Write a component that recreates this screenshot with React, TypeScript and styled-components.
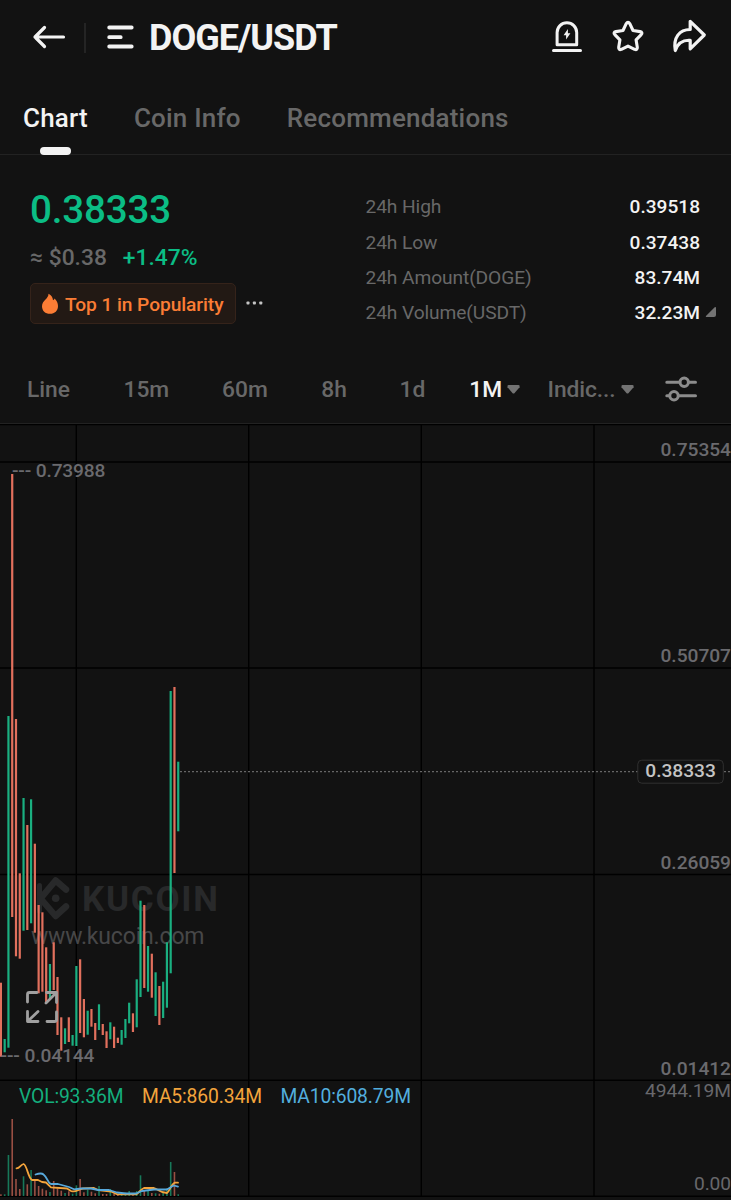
import React from 'react';
import styled, { createGlobalStyle } from 'styled-components';

const GlobalStyle = createGlobalStyle`
  *, *::before, *::after { box-sizing: border-box; }
  html, body { margin: 0; padding: 0; background: #121212; }
  body { font-family: Roboto, "Liberation Sans", sans-serif; overflow: hidden; }
`;

const Screen = styled.main`
  width: 731px;
  height: 1200px;
  display: flex;
  flex-direction: column;
  background: #121212;
  color: #f3f3f3;
  overflow: hidden;
  white-space: nowrap;
`;

const Header = styled.header`
  height: 75px;
  flex: none;
  display: flex;
  align-items: center;
  padding: 0 24px 0 32px;
`;

const Divider = styled.span`
  width: 2px;
  height: 30px;
  margin: 0 19px 0 18px;
  background: #242424;
`;

const Title = styled.h1`
  margin: 0 auto 0 15px;
  font-size: 36px;
  font-weight: 700;
  letter-spacing: -1px;
`;

const Actions = styled.div`
  display: flex;
  align-items: center;
  gap: 26px;
  padding-bottom: 3px;
`;

const Tabs = styled.nav`
  height: 80px;
  flex: none;
  display: flex;
  gap: 46px;
  padding-left: 23px;
  border-bottom: 1px solid #222;
`;

const Tab = styled.div<{ $active?: boolean }>`
  display: flex;
  flex-direction: column;
  align-items: center;
  justify-content: space-between;
  margin-bottom: -1px;
  padding-top: 27px;
  font-size: 26px;
  line-height: 32px;
  font-weight: 500;
  letter-spacing: 0.2px;
  color: ${p => (p.$active ? '#f3f3f3' : '#686868')};

  &::after {
    content: '';
    width: 31px;
    height: 8px;
    border-radius: 4px;
    background: ${p => (p.$active ? '#f3f3f3' : 'transparent')};
  }
`;

const Summary = styled.section`
  height: 201px;
  flex: none;
  display: flex;
  justify-content: space-between;
  padding: 32px 31px 0 30px;
`;

const PriceColumn = styled.div`
  display: flex;
  flex-direction: column;
`;

const Price = styled.div`
  height: 46px;
  line-height: 46px;
  font-size: 38.6px;
  font-weight: 500;
  letter-spacing: -0.2px;
  color: #0bbd85;
`;

const Converted = styled.div`
  display: flex;
  gap: 16px;
  height: 50px;
  line-height: 49px;
  font-size: 22.8px;
  font-weight: 500;
  color: #686868;
`;

const Change = styled.span`
  color: #0bbd85;
`;

const BadgeRow = styled.div`
  display: flex;
  align-items: center;
  gap: 9px;
`;

const Badge = styled.div`
  width: 206px;
  height: 41px;
  display: flex;
  align-items: center;
  gap: 6px;
  padding: 1px 0 0 9px;
  border: 1px solid #35231a;
  border-radius: 5px;
  background: #221914;
  color: #fb7d35;
  font-size: 19.2px;
  font-weight: 500;
  letter-spacing: -0.08px;

  svg {
    margin: 0 0 1px 1px;
  }
`;

const MoreDots = styled.svg`
  margin-bottom: 1px;
`;

const Stats = styled.dl`
  width: 334.5px;
  margin: 2.4px 0 0;
  display: flex;
  flex-direction: column;
`;

const Stat = styled.div`
  position: relative;
  height: 35.1px;
  display: flex;
  align-items: center;
  justify-content: space-between;
`;

const StatLabel = styled.dt`
  font-size: 19.2px;
  letter-spacing: -0.1px;
  color: #686868;
`;

const StatValue = styled.dd`
  margin: 0;
  font-size: 19.1px;
  font-weight: 500;
  color: #f3f3f3;
`;

const Corner = styled.svg`
  position: absolute;
  left: 339px;
  top: 11px;
`;

const Intervals = styled.nav`
  height: 68px;
  flex: none;
  display: flex;
  align-items: center;
  padding: 0 33px 0 27px;
  border-bottom: 1px solid #222;
`;

const Interval = styled.div<{ $active?: boolean; $gap: number; $spacing?: number }>`
  display: flex;
  align-items: center;
  gap: 5px;
  margin-right: ${p => p.$gap}px;
  font-size: 22.8px;
  font-weight: 500;
  letter-spacing: ${p => p.$spacing ?? 0}px;
  color: ${p => (p.$active ? '#f3f3f3' : '#686868')};
`;

const SettingsIcon = styled.svg`
  margin: 0 1px 1px auto;
`;

const Chart = styled.svg`
  display: block;
  flex: none;
  font-family: Roboto, "Liberation Sans", sans-serif;
`;

const Caret = () => (
  <svg width="13" height="10" viewBox="0 0 13 10">
    <path d="M1.6 0h9.800q1.200 0 1.200 1v1.200L7.600 7.900q-1.100 1-2.200 0L.5 2.200V1Q.5 0 1.600 0z" fill="#737373" />
  </svg>
);

// [rising, high, low, volume top]
const candles: [number, number, number, number][] = [
  [0, 982.7, 1056.7, 1194.3], [1, 1039, 1052.3, 1194.3], [1, 716, 1047.7, 1155], [0, 474, 917, 1119],
  [0, 719, 956.3, 1179], [0, 873.3, 958.7, 1189], [1, 798, 930.7, 1176.3], [0, 825, 930, 1184.3],
  [1, 799.3, 923.3, 1170], [0, 843.7, 932.7, 1181], [0, 905, 993.3, 1186], [0, 912.3, 991.7, 1188.7],
  [0, 947.3, 1003, 1190.3], [1, 964, 998, 1192], [0, 942.3, 990, 1181], [0, 977, 1035, 1188.3],
  [0, 1017.3, 1050.7, 1190.7], [1, 1028.3, 1044, 1193], [0, 1017.3, 1042, 1191.3], [1, 1035, 1045.7, 1193.7],
  [1, 966, 1046, 1185.3], [0, 959.3, 1033, 1179], [0, 999, 1037.3, 1192.3], [1, 1010.7, 1034.7, 1189.7],
  [0, 1009, 1026.7, 1191.7], [0, 1023, 1040, 1193.3], [1, 1004.3, 1030, 1186], [0, 1024, 1035, 1194],
  [0, 1031.3, 1048, 1194], [1, 1022.3, 1039.3, 1189], [0, 1026.7, 1048, 1193.7], [0, 1037.7, 1043, 1194.5],
  [1, 1030, 1044.7, 1194], [1, 1019, 1038, 1192.7], [1, 1002.7, 1023.3, 1191], [0, 1013.3, 1032, 1193.7],
  [1, 979.3, 1027.3, 1191], [1, 900.7, 997, 1175.3], [0, 905, 988, 1190], [1, 946, 991.7, 1190.3],
  [0, 953.7, 997.7, 1193], [1, 972.3, 1016, 1193.3], [0, 986, 1025, 1193.7], [1, 981.7, 1018, 1192.3],
  [1, 942.3, 1007.7, 1188.3], [1, 691, 973.3, 1162], [0, 687, 873, 1172], [1, 761.7, 831.3, 1194.3],
];
const candleX = (i: number) => 0.9 + i * 3.773;

const stats = [
  ['24h High', '0.39518'],
  ['24h Low', '0.37438'],
  ['24h Amount(DOGE)', '83.74M'],
  ['24h Volume(USDT)', '32.23M'],
];

const priceLabels: [string, number][] = [
  ['0.75354', 456], ['0.50707', 662], ['0.26059', 868.5], ['0.01412', 1074.7],
];

export default function App() {
  return (
    <Screen>
      <GlobalStyle />
      <Header>
        <svg width="34" height="30" viewBox="0 0 34 30" fill="none" stroke="#f3f3f3" strokeWidth="3.2" strokeLinecap="round" strokeLinejoin="round">
          <path d="M31.5 14H3M12.5 4.500L3 14l9.500 9.500" />
        </svg>
        <Divider />
        <svg width="29" height="26" viewBox="0 0 29 26" fill="none" stroke="#f3f3f3" strokeWidth="3.800" strokeLinecap="round">
          <path d="M4.200 2.500h22.500M4.200 12.200h11.500M4.200 21.500h22.500" />
        </svg>
        <Title>DOGE/USDT</Title>
        <Actions>
          <svg width="34" height="36" viewBox="0 0 34 36" fill="none" stroke="#f3f3f3" strokeWidth="3" strokeLinecap="round" strokeLinejoin="round">
            <path d="M8.100 26.800V14.500a9.800 9.800 0 0 1 19.600 0v12.300zM4.500 32.600h27" />
            <path d="M18.900 11l-4.300 6.200h2.500V21.500l4.300-6.200h-2.500z" fill="#f3f3f3" stroke="none" />
          </svg>
          <svg width="36" height="36" viewBox="0 0 36 36" fill="none" stroke="#f3f3f3" strokeWidth="3.100" strokeLinejoin="round">
            <path d="M17.100 5.800q1.900-2.900 3.800 0l3.100 6.700 7.100 1.100q3 .8 1.100 3l-5.100 5.300 1.200 7.400q.2 3.100-2.700 2L19 28.100 12.400 31.300q-2.900 1.100-2.700-2l1.200-7.400-5.100-5.300q-1.900-2.200 1.100-3l7.100-1.100z" />
          </svg>
          <svg width="36" height="38" viewBox="0 0 36 38" fill="none" stroke="#f3f3f3" strokeWidth="3.200" strokeLinejoin="round">
            <path d="M19.200 4.300L33.300 18 19.200 31.800V23.300C11 22.800 6.500 27 4.300 33.500 2 20.400 8.500 12.500 19.200 12.500z" />
          </svg>
        </Actions>
      </Header>

      <Tabs>
        <Tab $active>Chart</Tab>
        <Tab>Coin Info</Tab>
        <Tab>Recommendations</Tab>
      </Tabs>

      <Summary>
        <PriceColumn>
          <Price>0.38333</Price>
          <Converted>
            <span>≈ $0.38</span>
            <Change>+1.47%</Change>
          </Converted>
          <BadgeRow>
            <Badge>
              <svg width="18" height="22" viewBox="0 0 18 22">
                <path d="M7.500.8c3 1.700 4.300 3.800 4.500 6.400.9-.3 1.400-.9 1.600-1.700 2.200 2.200 3.400 4.800 3.400 7.500 0 4.700-3.200 7.800-8 7.800S1 17.700 1 13.200c0-3 1.500-4.800 3.500-6.700C6.300 4.800 7.500 3.200 7.500.8z" fill="#fb7d35" />
              </svg>
              Top 1 in Popularity
            </Badge>
            <MoreDots width="18" height="4" viewBox="0 0 18 4" fill="#c4c4c4">
              <rect x="1.500" y="0.500" width="3" height="3" rx="0.800" />
              <rect x="7.900" y="0.500" width="3" height="3" rx="0.800" />
              <rect x="14.300" y="0.500" width="3" height="3" rx="0.800" />
            </MoreDots>
          </BadgeRow>
        </PriceColumn>
        <Stats>
          {stats.map(([label, value], i) => (
            <Stat key={label}>
              <StatLabel>{label}</StatLabel>
              <StatValue>{value}</StatValue>
              {i === 3 && (
                <Corner width="12" height="12" viewBox="0 0 12 12">
                  <path d="M9.700 1.300Q11 .5 11 2v7q0 2-2 2H2Q0 11 1.200 9.700z" fill="#737373" />
                </Corner>
              )}
            </Stat>
          ))}
        </Stats>
      </Summary>

      <Intervals>
        <Interval $gap={53.4}>Line</Interval>
        <Interval $gap={52.8}>15m</Interval>
        <Interval $gap={53.4}>60m</Interval>
        <Interval $gap={52.8}>8h</Interval>
        <Interval $gap={43.8}>1d</Interval>
        <Interval $gap={27.5} $active>1M<Caret /></Interval>
        <Interval $gap={0} $spacing={-0.1}>Indic...<Caret /></Interval>
        <SettingsIcon width="32" height="26" viewBox="0 0 32 26" fill="none" stroke="#8c8c8c" strokeWidth="3" strokeLinecap="round">
          <path d="M1.800 6.300h13M23.500 6.300h7M1.800 19.800h2.500M13.500 19.800h17" />
          <circle cx="19.200" cy="6.300" r="4.200" />
          <circle cx="9" cy="19.800" r="4.200" />
        </SettingsIcon>
      </Intervals>

      <Chart width="731" height="776" viewBox="0 424 731 776">
        <g stroke="#000" strokeWidth="1.400">
          {[424.5, 462, 668, 874.5, 1080.3, 1196.3].map(y => <path key={y} d={`M0 ${y}H731`} />)}
          {[76.3, 248.7, 421.3, 594].map(x => <path key={x} d={`M${x} 424V1196`} />)}
        </g>

        <g>
          <g fill="none" stroke="#28292a" strokeWidth="6.500" strokeLinejoin="round" strokeLinecap="round">
            <path d="M39.500 885.500V911" strokeWidth="5" />
            <path d="M66 889.500L55.600 880.500 40.500 898.500 55.600 916 66 906.500" />
          </g>
          <circle cx="55.700" cy="898.300" r="3.800" fill="#28292a" />
          <text x="82" y="911" fontSize="35" fontWeight="700" textLength="136" fill="#28292a">KUCOIN</text>
          <text x="31" y="943.600" fontSize="23" textLength="173.500" fill="#474748">www.kucoin.com</text>
        </g>

        {candles.map(([up, high, low, vol], i) => (
          <g key={i} fill={up ? '#1aaf80' : '#e2705d'}>
            <rect x={candleX(i) - 1.1} y={high} width="2.200" height={low - high} />
            <rect x={candleX(i) - 0.8} y={vol} width="1.600" height={1196 - vol} opacity="0.650" />
          </g>
        ))}

        <g fill="#6a6a6e" fontSize="19.200" fontWeight="500">
          <text x="12" y="477" textLength="93.500">--- 0.73988</text>
          <text x="0.500" y="1061.500" textLength="94">--- 0.04144</text>
          {priceLabels.map(([label, y]) => (
            <text key={label} x="731" y={y} textAnchor="end" textLength="70.500">{label}</text>
          ))}
        </g>
        <g fill="#68686c" fontSize="19.200">
          <text x="731" y="1097.200" textAnchor="end" textLength="86">4944.19M</text>
          <text x="731" y="1190.300" textAnchor="end" textLength="37">0.00</text>
        </g>

        <path d="M180 771.600H731" stroke="#666" strokeWidth="1.300" strokeDasharray="2 2" />
        <rect x="637.800" y="760.200" width="85.500" height="23" rx="4" fill="#121212" stroke="#303030" />
        <text x="645.300" y="777" fontSize="19.200" fontWeight="500" textLength="70.500" fill="#c4c4c4">0.38333</text>

        <g fill="none" stroke="#a0a0a0" strokeWidth="2.800" strokeLinecap="round" strokeLinejoin="round">
          <path d="M27.500 1002v-7.500q0-2 2-2h7.500M46.500 992.500h10v10M56 993l-10 10M56.500 1012v7.500q0 2-2 2H47M38 1021.500H27.500v-10M28 1021l10-9.500" />
        </g>

        <g fontSize="19.300">
          <text x="19" y="1103.300" textLength="104.500" fill="#14ae7d">VOL:93.36M</text>
          <text x="142" y="1103.300" textLength="120" fill="#f3a43c">MA5:860.34M</text>
          <text x="280.500" y="1103.300" textLength="130.500" fill="#52aede">MA10:608.79M</text>
        </g>

        <g fill="none" strokeWidth="1.800" strokeLinejoin="round" strokeLinecap="round">
          <path stroke="#f3a43c" d="M16.500 1168.300C20 1168 20 1165 23.600 1164 27 1165 28 1178 32 1180H38L42 1182 46 1182.500 51 1187.300 67 1188.500 71 1191C76 1193 78 1189 83 1188.500L94 1188 98 1190 111 1191.500 117 1194.300H136C139 1193 140 1189.500 144 1188H154C158 1189 160 1193 167 1193 170 1191 171 1184 175 1182.700H178" />
          <path stroke="#58a9dc" d="M35.500 1174.500C40 1173 42 1173 43.500 1174.500 48 1178 48 1184 51 1184H58L69 1187 74 1189.300 81 1188.500H91L98 1190H109L117 1192.500 126 1193.500H136L142 1191 154 1189.500H167L171 1187 174 1185.500 178 1186.600" />
        </g>
      </Chart>
    </Screen>
  );
}
